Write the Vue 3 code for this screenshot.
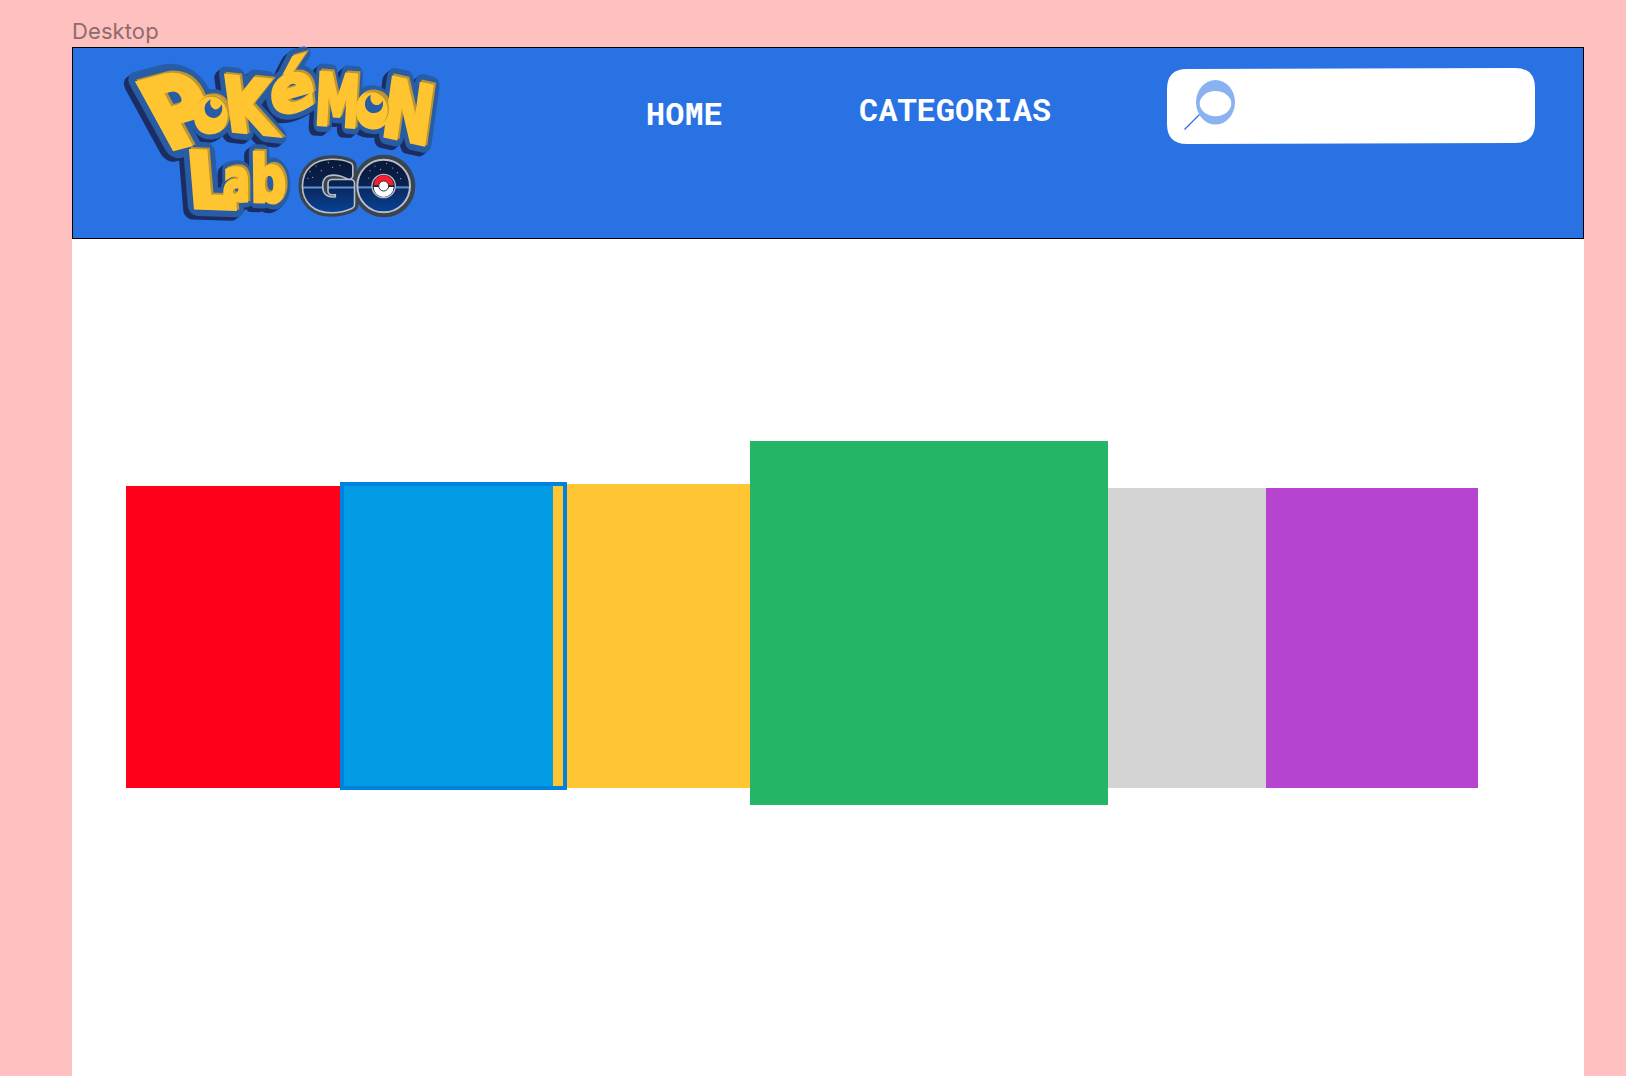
<script setup>
// Each glyph is fitted from its ink box [x0, y0, x1, y1] (100px em)
// onto a parallelogram given by top-left, top-right and bottom-left corners.
const glyphs = [
  { c: 'P', ink: [9, -73, 68, 0], tl: [88, 128], tr: [230, 90], bl: [194, 322] },
  { c: 'o', ink: [4, -56, 64, 1], tl: [257, 172], tr: [350, 166], bl: [259, 278] },
  { c: 'K', ink: [9, -73, 79, 0], tl: [350, 106], tr: [482, 120], bl: [372, 270] },
  { c: 'é', ink: [4, -80, 63, 1], tl: [478, 72], tr: [592, 40], bl: [498, 228] },
  { c: 'M', ink: [9, -73, 90, 0], tl: [634, 96], tr: [742, 104], bl: [626, 250] },
  { c: 'o', ink: [4, -56, 64, 1], tl: [746, 154], tr: [836, 162], bl: [742, 256] },
  { c: 'N', ink: [9, -73, 75, 0], tl: [852, 112], tr: [968, 138], bl: [828, 284] },
  { c: 'L', ink: [9, -73, 62, 0], tl: [246, 332], tr: [364, 336], bl: [260, 500] },
  { c: 'a', ink: [4, -56, 59, 1], tl: [345, 384], tr: [412, 380], bl: [345, 486] },
  { c: 'b', ink: [8, -76, 67, 1], tl: [434, 336], tr: [522, 338], bl: [436, 484] },
]
const emblem = { ink: [5, -74, 75, 1], tl: [589, 369], tr: [722, 369], bl: [589, 507] }

function fit({ ink, tl, tr, bl }) {
  const [x0, y0, x1, y1] = ink
  const a = (tr[0] - tl[0]) / (x1 - x0)
  const b = (tr[1] - tl[1]) / (x1 - x0)
  const c = (bl[0] - tl[0]) / (y1 - y0)
  const d = (bl[1] - tl[1]) / (y1 - y0)
  const e = tl[0] - a * x0 - c * y0
  const f = tl[1] - b * x0 - d * y0
  return `matrix(${[a, b, c, d, e, f].join(' ')})`
}

const stars = [
  [600, 395], [618, 378], [634, 392], [655, 368], [668, 382], [690, 376], [594, 415], [608, 412],
  [780, 392], [795, 378], [812, 388], [830, 370], [848, 384], [862, 398], [872, 416], [776, 414],
]
</script>

<template>
  <div class="canvas">
    <div class="frame-label">Desktop</div>
    <main class="frame">
      <header class="bar">
        <svg class="logo" viewBox="0 0 1020 570" role="img" aria-label="Pokémon Lab Go">
          <defs>
            <linearGradient id="sky" gradientUnits="userSpaceOnUse" x1="0" y1="350" x2="0" y2="525">
              <stop offset="0" stop-color="#081634" />
              <stop offset="0.5" stop-color="#0a234f" />
              <stop offset="0.52" stop-color="#6ba6e6" />
              <stop offset="0.56" stop-color="#0b2a63" />
              <stop offset="1" stop-color="#06459c" />
            </linearGradient>
            <linearGradient id="sky-g" gradientUnits="userSpaceOnUse" x1="0" y1="-84" x2="0" y2="11">
              <stop offset="0" stop-color="#081634" />
              <stop offset="0.5" stop-color="#0a234f" />
              <stop offset="0.52" stop-color="#6ba6e6" />
              <stop offset="0.56" stop-color="#0b2a63" />
              <stop offset="1" stop-color="#06459c" />
            </linearGradient>
            <g id="letters">
              <text v-for="(g, i) in glyphs" :key="i" :transform="fit(g)">{{ g.c }}</text>
            </g>
            <text id="letter-g" :transform="fit(emblem)">G</text>
          </defs>

          <g class="letters">
            <use href="#letters" class="deep" x="-15" y="12" />
            <use href="#letters" class="deep" x="-10" y="8" />
            <use href="#letters" class="deep" x="-5" y="4" />
            <use href="#letters" class="edge" />
            <use href="#letters" class="gold" x="4" y="-3" />
            <use href="#letters" class="face" x="-2" y="2" />
          </g>

          <g>
            <ellipse cx="306" cy="222" rx="50" ry="56" fill="#bd9430" />
            <ellipse cx="303" cy="226" rx="50" ry="56" fill="#ffc531" />
            <ellipse cx="791" cy="206" rx="46" ry="53" fill="#bd9430" />
            <ellipse cx="787" cy="210" rx="46" ry="53" fill="#ffc531" />
            <path d="M303 178C272 192 281 235 313 234C332 232 342 211 334 193C330 205 321 211 312 207C300 201 298 187 303 178Z" fill="#285ca4" />
            <path d="M783 164C754 178 762 220 792 219C812 218 823 201 818 182C812 193 803 198 794 194C782 189 779 174 783 164Z" fill="#285ca4" />
          </g>

          <g class="letters">
            <circle cx="822" cy="438" r="94" fill="#3b444d" />
            <use href="#letter-g" class="go-rim" />
            <use href="#letter-g" class="go-line" />
            <use href="#letter-g" class="go-sky" />
            <circle cx="821" cy="438" r="79" fill="url(#sky)" stroke="#b8bfcc" stroke-width="6" />
            <circle v-for="(s, i) in stars" :key="i" :cx="s[0]" :cy="s[1]" r="1.8" fill="#a9bbd8" />
            <circle cx="821" cy="438" r="35" fill="#17233f" stroke="#b8bfcc" stroke-width="4" />
            <path d="M791 436A30 30 0 0 1 851 436Z" fill="#ff1c2c" />
            <path d="M791 441A30 30 0 0 0 851 441Z" fill="#fff" />
            <circle cx="821" cy="438" r="15" fill="#fff" stroke="#26314a" stroke-width="3" />
          </g>
        </svg>

        <nav class="nav">
          <a class="home">HOME</a>
          <a class="categories">CATEGORIAS</a>
        </nav>

        <div class="search">
          <svg viewBox="0 0 368 76">
            <path d="M20 1L348 0Q368 0 368 20V55Q368 75 348 75L20 76Q0 76 0 56V21Q0 1 20 1Z" fill="#fff" />
            <path d="M17.5 61.5L33 46" stroke="#2972e4" stroke-width="1.2" />
            <ellipse cx="48.5" cy="34.3" rx="19.5" ry="22.3" fill="#8ab2f1" />
            <ellipse cx="48.5" cy="35.6" rx="15.8" ry="12.6" fill="#fff" />
          </svg>
        </div>
      </header>

      <section class="blocks">
        <div class="block red"></div>
        <div class="block blue"><span></span></div>
        <div class="block yellow"></div>
        <div class="block green"></div>
        <div class="block gray"></div>
        <div class="block purple"></div>
      </section>
    </main>
  </div>
</template>

<style>
body {
  margin: 0;
  overflow: hidden;
}
</style>

<style scoped>
.canvas {
  box-sizing: border-box;
  width: 1626px;
  height: 1076px;
  padding: 0 42px 0 72px;
  display: flex;
  flex-direction: column;
  overflow: hidden;
  background: #ffc0c0;
}
.frame-label {
  height: 47px;
  box-sizing: border-box;
  padding-top: 17px;
  font: 22px/28px Inter, sans-serif;
  letter-spacing: 0.1px;
  color: #8f6c6c;
}
.frame {
  flex: 1;
  background: #fff;
}
.bar {
  box-sizing: border-box;
  height: 192px;
  border: 1px solid #000;
  background: #2972e4;
  display: flex;
  align-items: flex-start;
}
.logo {
  width: 340px;
  height: 190px;
  margin: -8px 0 0 37px;
  flex: none;
}
.letters {
  font: bold 100px "DejaVu Sans", sans-serif;
  stroke-linejoin: round;
}
.deep {
  fill: #1b2d62;
  stroke: #1b2d62;
  stroke-width: 23px;
}
.edge {
  fill: #285ca4;
  stroke: #285ca4;
  stroke-width: 24px;
}
.gold {
  fill: #bd9430;
  stroke: #bd9430;
  stroke-width: 7px;
  stroke-linejoin: miter;
}
.face {
  fill: #ffc531;
  stroke: #ffc531;
  stroke-width: 6px;
  stroke-linejoin: miter;
}
.go-rim {
  fill: #3b444d;
  stroke: #3b444d;
  stroke-width: 25px;
}
.go-line {
  fill: #b8bfcc;
  stroke: #b8bfcc;
  stroke-width: 15px;
}
.go-sky {
  fill: url(#sky-g);
  stroke: url(#sky-g);
  stroke-width: 10px;
}
.nav {
  flex: none;
  width: 717px;
  display: flex;
  align-items: flex-start;
  font: 700 32px/42px "Roboto Mono", "DejaVu Sans Mono", monospace;
  color: #fff;
}
.home {
  margin: 44px 0 0 196px;
  width: 213px;
}
.categories {
  margin-top: 40px;
}
.search {
  flex: none;
  width: 368px;
  height: 76px;
  margin: 20px 0 0 0;
}
.search svg {
  display: block;
  width: 368px;
  height: 76px;
}
.blocks {
  display: flex;
  align-items: flex-start;
  padding: 202px 0 0 54px;
}
.block {
  box-sizing: border-box;
  flex: none;
}
.red {
  width: 214px;
  height: 302px;
  margin-top: 45px;
  background: #ff001a;
}
.blue {
  width: 227px;
  height: 308px;
  margin-top: 41px;
  border: 4px solid #0081df;
  background: #ffc533;
}
.blue span {
  display: block;
  width: 209px;
  height: 100%;
  background: #029ce4;
}
.yellow {
  width: 183px;
  height: 304px;
  margin-top: 43px;
  background: #ffc533;
}
.green {
  width: 358px;
  height: 364px;
  background: #24b566;
}
.gray {
  width: 158px;
  height: 300px;
  margin-top: 47px;
  background: #d4d4d4;
}
.purple {
  width: 212px;
  height: 300px;
  margin-top: 47px;
  background: #b644d1;
}
</style>
